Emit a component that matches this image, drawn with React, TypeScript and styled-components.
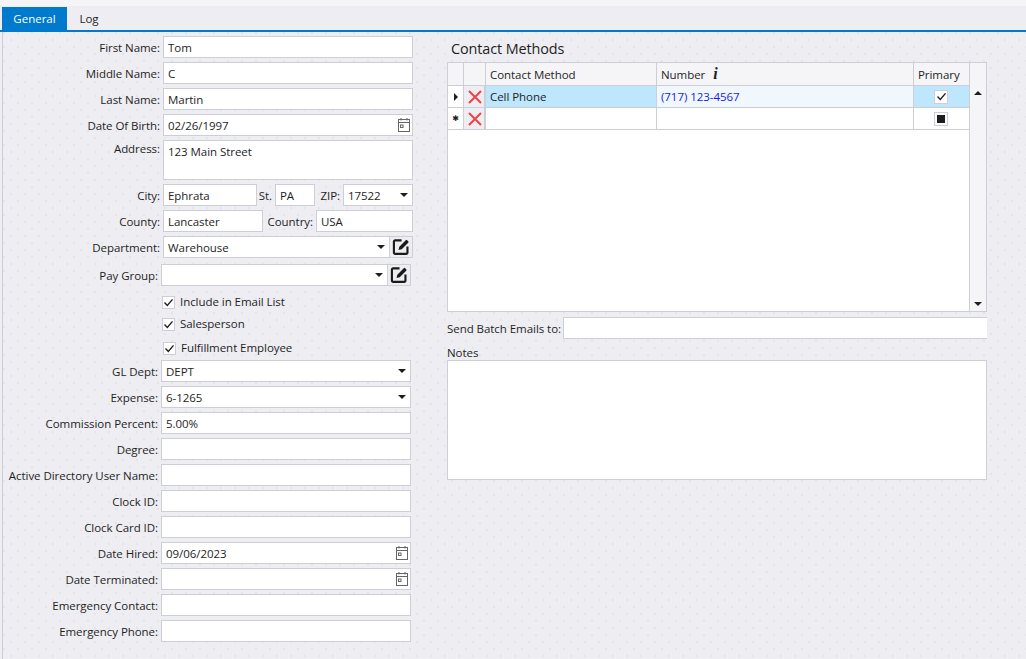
import React from "react";
import styled, { createGlobalStyle } from "styled-components";

const Global = createGlobalStyle`
  html, body { margin: 0; padding: 0; width: 1026px; height: 659px; overflow: hidden; }
  body { font-family: "Open Sans", "Noto Sans", "Liberation Sans", sans-serif; font-size: 11.5px; color: #1e1e1e; }
  * { box-sizing: border-box; }
`;

const Page = styled.div`
  width: 1026px;
  height: 659px;
  display: flex;
  flex-direction: column;
  background-color: #eeeef2;
`;
const TopStrip = styled.div`
  height: 6px;
  flex: none;
  background: #f5f5f7;
`;
const TabBar = styled.div`
  height: 26px;
  flex: none;
  padding: 1px 0 0 2px;
  display: flex;
  border-bottom: 2px solid #007acc;
`;
const Tab = styled.div<{ $active?: boolean }>`
  height: 23px;
  width: ${(p) => (p.$active ? "65px" : "44px")};
  display: flex;
  align-items: center;
  justify-content: center;
  font-size: 11.5px;
  background: ${(p) => (p.$active ? "#007acc" : "transparent")};
  color: ${(p) => (p.$active ? "#ffffff" : "#1e1e1e")};
`;
const Body = styled.div`
  flex: 1;
  display: flex;
  margin-left: 2px;
  padding-top: 4px;
  border-left: 1px solid #ccced8;
  background-color: #eeeef2;
  background-image:
    radial-gradient(circle at 1px 1px, #dedee6 0.6px, transparent 0.9px),
    radial-gradient(circle at 1px 1px, #dedee6 0.6px, transparent 0.9px);
  background-size: 14px 14px;
  background-position: 0 0, 7px 7px;
`;
const LeftPanel = styled.div`
  width: 444px;
  flex: none;
  display: flex;
  flex-direction: column;
  gap: 4px;
`;
const Row = styled.div<{ $narrow?: boolean; $top?: number }>`
  display: flex;
  align-items: center;
  height: 22px;
  width: ${(p) => (p.$narrow ? "408px" : "410px")};
  margin-top: ${(p) => p.$top ?? 0}px;
`;
const AddressRow = styled(Row)`
  height: 40px;
  align-items: flex-start;
`;
const Label = styled.label<{ $narrow?: boolean }>`
  flex: none;
  width: ${(p) => (p.$narrow ? "155px" : "157px")};
  margin-right: 3px;
  text-align: right;
  white-space: nowrap;
  letter-spacing: -0.05px;
  color: #1e1e1e;
`;
const AddressLabel = styled(Label)`
  line-height: 18px;
`;
const InlineLabel = styled.span<{ $w: number }>`
  flex: none;
  width: ${(p) => p.$w}px;
  text-align: right;
  padding-right: 3px;
  white-space: nowrap;
  letter-spacing: -0.05px;
`;
const Field = styled.div<{ $w?: number; $tall?: boolean }>`
  flex: ${(p) => (p.$w ? "none" : "1")};
  width: ${(p) => (p.$w ? `${p.$w}px` : "auto")};
  height: ${(p) => (p.$tall ? "40px" : "22px")};
  background: #ffffff;
  border: 1px solid #ccced8;
  padding: ${(p) => (p.$tall ? "3px 2px 0 4px" : "0 2px 0 4px")};
  display: flex;
  align-items: ${(p) => (p.$tall ? "flex-start" : "center")};
  justify-content: space-between;
  white-space: nowrap;
  letter-spacing: -0.05px;
  min-width: 0;
`;
const Arrow = styled.span`
  width: 0;
  height: 0;
  flex: none;
  margin-right: 2px;
  border-left: 4px solid transparent;
  border-right: 4px solid transparent;
  border-top: 4px solid #1e1e1e;
`;
const EditButton = styled.div`
  flex: none;
  width: 23px;
  height: 22px;
  display: flex;
  align-items: center;
  justify-content: center;
  border: 1px solid #ccced8;
  border-left: none;
  background: #eeeef2;
`;
const CheckRow = styled.div<{ $top: number; $left?: number }>`
  display: flex;
  align-items: center;
  height: 13px;
  margin-top: ${(p) => p.$top}px;
  padding-left: ${(p) => p.$left ?? 159}px;
  gap: 5px;
  letter-spacing: -0.05px;
  white-space: nowrap;
`;
const CheckText = styled.span`
  position: relative;
  top: -1px;
`;
const CheckBox = styled.span`
  width: 13px;
  height: 13px;
  flex: none;
  display: flex;
  align-items: center;
  justify-content: center;
  background: #ffffff;
  border: 1px solid #ccced8;
`;

const RightPanel = styled.div`
  width: 540px;
  flex: none;
  display: flex;
  flex-direction: column;
`;
const Title = styled.div`
  height: 26px;
  padding-left: 4px;
  font-size: 14.4px;
  line-height: 26px;
  letter-spacing: -0.1px;
`;
const GridBox = styled.div`
  height: 250px;
  border: 1px solid #ccced8;
  background: #ffffff;
  display: flex;
`;
const GridMain = styled.div`
  flex: 1;
  min-width: 0;
`;
const GridRow = styled.div<{ $head?: boolean }>`
  display: grid;
  grid-template-columns: 16px 22px 171px 257px 56px;
  height: ${(p) => (p.$head ? "23px" : "22px")};
  border-bottom: 1px solid #ccced8;
`;
const Cell = styled.div<{ $bg?: string; $center?: boolean }>`
  display: flex;
  align-items: center;
  justify-content: ${(p) => (p.$center ? "center" : "flex-start")};
  padding: ${(p) => (p.$center ? "0" : "0 4px")};
  background: ${(p) => p.$bg ?? "#ffffff"};
  border-right: 1px solid #ccced8;
  white-space: nowrap;
  letter-spacing: -0.05px;
  min-width: 0;
`;
const HeadCell = styled(Cell)`
  background: #f5f5f7;
`;
const DeleteCell = styled(Cell)`
  background: #eeeef2;
  border-right: 2px solid #ccced8;
  border-left: 1px solid #eeeef2;
`;
const PhoneCell = styled(Cell)`
  color: #1a1ae6;
`;
const InfoMark = styled.span`
  font-family: "Liberation Serif", serif;
  font-style: italic;
  font-weight: 700;
  font-size: 16px;
  margin-left: 8px;
`;
const RowMarker = styled.span`
  width: 0;
  height: 0;
  border-top: 4px solid transparent;
  border-bottom: 4px solid transparent;
  border-left: 4px solid #1e1e1e;
`;
const NewMarker = styled.span`
  font-size: 8px;
  font-family: "DejaVu Sans", sans-serif;
  line-height: 1;
  color: #1e1e1e;
`;
const SmallCheck = styled.span`
  width: 14px;
  height: 14px;
  margin-right: 1px;
  display: flex;
  align-items: center;
  justify-content: center;
  background: #ffffff;
  border: 1px solid #ccced8;
`;
const Square = styled.span`
  width: 8px;
  height: 8px;
  background: #1e1e1e;
`;
const Scrollbar = styled.div`
  width: 17px;
  flex: none;
  background: #f5f5f7;
  display: flex;
  flex-direction: column;
  justify-content: space-between;
  align-items: center;
  padding: 28px 0 5px;
  border-left: 1px solid #ccced8;
`;
const ScrollArrow = styled.span<{ $up?: boolean }>`
  width: 0;
  height: 0;
  border-left: 4px solid transparent;
  border-right: 4px solid transparent;
  border-top: ${(p) => (p.$up ? "0" : "4px solid #1e1e1e")};
  border-bottom: ${(p) => (p.$up ? "4px solid #1e1e1e" : "0")};
`;
const BatchRow = styled.div`
  display: flex;
  align-items: center;
  height: 22px;
  margin-top: 5px;
`;
const BatchLabel = styled.span`
  flex: none;
  width: 116px;
  white-space: nowrap;
  letter-spacing: -0.05px;
`;
const BatchInput = styled.div`
  flex: 1;
  height: 22px;
  background: #ffffff;
  border: 1px solid #ccced8;
  border-right: none;
`;
const NotesLabel = styled.div`
  height: 21px;
  line-height: 27px;
  letter-spacing: -0.05px;
`;
const NotesBox = styled.div`
  height: 120px;
  background: #ffffff;
  border: 1px solid #ccced8;
`;

const Calendar = () => (
  <svg width="12" height="14" viewBox="0 0 12 14" fill="none" stroke="#666" strokeWidth="1">
    <rect x="0.5" y="1.5" width="11" height="12" />
    <path d="M0.5 4.5H11.5M3 0V2.5M9 0V2.5" />
    <rect x="2.5" y="7" width="2.5" height="2.5" />
  </svg>
);
const Edit = () => (
  <svg width="18" height="18" viewBox="0 0 17 17" fill="none">
    <path d="M9 2.2H3a1.2 1.2 0 0 0-1.2 1.2v10.4A1.2 1.2 0 0 0 3 15h10.4a1.2 1.2 0 0 0 1.2-1.2V8" stroke="#1a1a1a" strokeWidth="2" />
    <path d="M6.2 11.3l.7-3L13 2.1a.9.9 0 0 1 1.3 0l1 1a.9.9 0 0 1 0 1.3L9.2 10.6z" fill="#1a1a1a" />
  </svg>
);
const Tick = () => (
  <svg width="11" height="11" viewBox="0 0 11 11" fill="none" stroke="#1e1e1e" strokeWidth="1.4">
    <path d="M1.5 5.6L4.3 8.4L9.5 2.4" />
  </svg>
);
const RedX = () => (
  <svg width="14" height="14" viewBox="0 0 14 14" fill="none" stroke="#f2404a" strokeWidth="2">
    <path d="M1 1L13 13M13 1L1 13" />
  </svg>
);

const TextRow = ({ label, value, narrow, top, cal }: { label: string; value?: string; narrow?: boolean; top?: number; cal?: boolean }) => (
  <Row $narrow={narrow} $top={top}>
    <Label $narrow={narrow}>{label}</Label>
    <Field>
      <span>{value}</span>
      {cal && <Calendar />}
    </Field>
  </Row>
);
const SelectRow = ({ label, value, narrow, top, edit }: { label: string; value?: string; narrow?: boolean; top?: number; edit?: boolean }) => (
  <Row $narrow={narrow} $top={top}>
    <Label $narrow={narrow}>{label}</Label>
    <Field>
      <span>{value}</span>
      <Arrow />
    </Field>
    {edit && (
      <EditButton>
        <Edit />
      </EditButton>
    )}
  </Row>
);

export default function App() {
  return (
    <Page>
      <Global />
      <TopStrip />
      <TabBar>
        <Tab $active>General</Tab>
        <Tab>Log</Tab>
      </TabBar>
      <Body>
        <LeftPanel>
          <TextRow label="First Name:" value="Tom" />
          <TextRow label="Middle Name:" value="C" />
          <TextRow label="Last Name:" value="Martin" />
          <TextRow label="Date Of Birth:" value="02/26/1997" cal />
          <AddressRow>
            <AddressLabel>Address:</AddressLabel>
            <Field $tall>123 Main Street</Field>
          </AddressRow>
          <Row>
            <Label>City:</Label>
            <Field $w={94}>Ephrata</Field>
            <InlineLabel $w={18}>St.</InlineLabel>
            <Field $w={40}>PA</Field>
            <InlineLabel $w={28}>ZIP:</InlineLabel>
            <Field $w={70}>
              <span>17522</span>
              <Arrow />
            </Field>
          </Row>
          <Row>
            <Label>County:</Label>
            <Field $w={100}>Lancaster</Field>
            <InlineLabel $w={53}>Country:</InlineLabel>
            <Field $w={97}>USA</Field>
          </Row>
          <SelectRow label="Department:" value="Warehouse" edit />
          <SelectRow label="Pay Group:" narrow top={2} edit />
          <CheckRow $top={6}>
            <CheckBox><Tick /></CheckBox>
            <CheckText>Include in Email List</CheckText>
          </CheckRow>
          <CheckRow $top={5}>
            <CheckBox><Tick /></CheckBox>
            <CheckText>Salesperson</CheckText>
          </CheckRow>
          <CheckRow $top={7} $left={160}>
            <CheckBox><Tick /></CheckBox>
            <CheckText>Fulfillment Employee</CheckText>
          </CheckRow>
          <SelectRow label="GL Dept:" value="DEPT" narrow top={1} />
          <SelectRow label="Expense:" value="6-1265" narrow />
          <TextRow label="Commission Percent:" value="5.00%" narrow />
          <TextRow label="Degree:" narrow />
          <TextRow label="Active Directory User Name:" narrow />
          <TextRow label="Clock ID:" narrow />
          <TextRow label="Clock Card ID:" narrow />
          <TextRow label="Date Hired:" value="09/06/2023" narrow cal />
          <TextRow label="Date Terminated:" narrow cal />
          <TextRow label="Emergency Contact:" narrow />
          <TextRow label="Emergency Phone:" narrow />
        </LeftPanel>
        <RightPanel>
          <Title>Contact Methods</Title>
          <GridBox>
            <GridMain>
              <GridRow $head>
                <HeadCell />
                <HeadCell />
                <HeadCell>Contact Method</HeadCell>
                <HeadCell>
                  Number<InfoMark>i</InfoMark>
                </HeadCell>
                <HeadCell>Primary</HeadCell>
              </GridRow>
              <GridRow>
                <Cell $center><RowMarker /></Cell>
                <DeleteCell $center><RedX /></DeleteCell>
                <Cell $bg="#bee6fd">Cell Phone</Cell>
                <PhoneCell $bg="#f0f8fe">(717) 123-4567</PhoneCell>
                <Cell $bg="#bee6fd" $center>
                  <SmallCheck><Tick /></SmallCheck>
                </Cell>
              </GridRow>
              <GridRow>
                <Cell $center><NewMarker>✱</NewMarker></Cell>
                <DeleteCell $center><RedX /></DeleteCell>
                <Cell />
                <Cell />
                <Cell $center>
                  <SmallCheck><Square /></SmallCheck>
                </Cell>
              </GridRow>
            </GridMain>
            <Scrollbar>
              <ScrollArrow $up />
              <ScrollArrow />
            </Scrollbar>
          </GridBox>
          <BatchRow>
            <BatchLabel>Send Batch Emails to:</BatchLabel>
            <BatchInput />
          </BatchRow>
          <NotesLabel>Notes</NotesLabel>
          <NotesBox />
        </RightPanel>
      </Body>
    </Page>
  );
}
